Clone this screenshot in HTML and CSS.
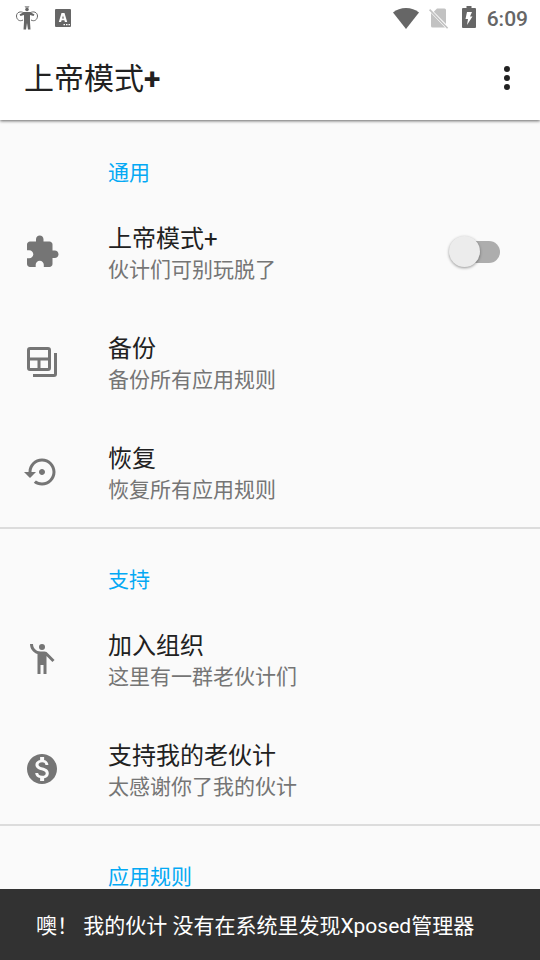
FILE: index.html
```html
<!DOCTYPE html>
<html lang="zh-CN">
<head>
<meta charset="utf-8">
<meta name="viewport" content="width=device-width, initial-scale=1">
<title>上帝模式+</title>
<link rel="stylesheet" href="styles.css">
</head>
<body>
<header class="app-header">
  <div class="status-bar">
    <div class="status-group">
      <svg class="status-person" viewBox="0 0 22 26" aria-hidden="true">
        <path d="M8.500 1h5l-1 2h-3z" opacity=".6"/>
        <circle cx="11" cy="4.500" r="1.800"/>
        <path d="M8 7h6l4.500 2.500-1 1.500-3.500-1v7l.5 7.500h-2.500L11 18l-1 6.500H7.500L8 17v-7l-3.500 1-1-1.500z"/>
        <path d="M8 8C4.500 5.500.500 7.500.500 11s3 6 6.500 4M14 8c3.500-2.500 7.500-.5 7.500 3s-3 6-6.500 4" fill="none" stroke="currentColor" stroke-width="1"/>
      </svg>
      <svg class="status-input" viewBox="0 0 16 18" aria-hidden="true">
        <path fill-rule="evenodd" d="M1 0h14a1 1 0 0 1 1 1v16a1 1 0 0 1-1 1H1a1 1 0 0 1-1-1V1a1 1 0 0 1 1-1zM6.500 4L3.800 13h2.300l.5-1.700h2.800l.5 1.700h2.300L9.500 4zM7.100 9.600L8 6.400l.9 3.200zM8.500 15v1.300H10V15zm2.500 0v1.300h1.500V15zm2.500 0v1.300H15V15z"/>
      </svg>
    </div>
    <div class="status-group status-right">
      <svg class="status-wifi" viewBox="0 0 26 21" aria-hidden="true"><path d="M13 21L0 4.500C3.500 1.600 8 0 13 0s9.500 1.600 13 4.500z"/></svg>
      <svg class="status-sim" viewBox="0 0 20 21" aria-hidden="true"><path d="M8 .5h7.500A1.500 1.500 0 0 1 17 2v14L4.800 3.700zM2 5l14 14.500H3.500A1.500 1.500 0 0 1 2 18z"/><path d="M.6 1.600L18.600 20.300" fill="none" stroke="currentColor" stroke-width="1.600"/></svg>
      <svg class="status-battery" viewBox="0 0 14 22" aria-hidden="true"><path fill-rule="evenodd" d="M4.500 0h5v2H13a1 1 0 0 1 1 1v18a1 1 0 0 1-1 1H1a1 1 0 0 1-1-1V3a1 1 0 0 1 1-1h3.500zM5 6l-1.500 7H6l-1 6 5.500-8.500H8L10 6z"/></svg>
      <time class="clock">6:09</time>
    </div>
  </div>
  <div class="toolbar">
    <h1 class="toolbar-title">上帝模式<span class="plus">+</span></h1>
    <button class="menu-button" type="button" aria-label="更多选项">
      <svg class="icon" viewBox="0 0 24 24" aria-hidden="true"><circle cx="12" cy="6" r="2"/><circle cx="12" cy="12" r="2"/><circle cx="12" cy="18" r="2"/></svg>
    </button>
  </div>
</header>

<main>
  <section class="group">
    <h2 class="group-title">通用</h2>
    <label class="row">
      <svg class="icon" viewBox="0 0 24 24" aria-hidden="true"><path d="M20.500 11H19V7c0-1.100-.9-2-2-2h-4V3.500C13 2.120 11.880 1 10.500 1S8 2.120 8 3.500V5H4c-1.100 0-1.990.9-1.990 2v3.800H3.500c1.490 0 2.700 1.210 2.700 2.700s-1.210 2.700-2.700 2.700H2V20c0 1.100.9 2 2 2h3.800v-1.500c0-1.490 1.210-2.700 2.700-2.700 1.490 0 2.700 1.210 2.700 2.700V22H17c1.100 0 2-.9 2-2v-4h1.500c1.380 0 2.500-1.120 2.500-2.500S21.880 11 20.500 11z"/></svg>
      <span class="row-text"><span class="row-title">上帝模式+</span><span class="row-summary">伙计们可别玩脱了</span></span>
      <input class="switch" type="checkbox" role="switch">
    </label>
    <button class="row" type="button">
      <svg class="icon" viewBox="0 0 24 24" aria-hidden="true"><g fill="none" stroke="currentColor" stroke-width="2"><rect x="3" y="3" width="14" height="14" rx="1"/><path d="M3 10h14M10 10v7"/><path d="M21 6v14a1 1 0 0 1-1 1H6"/></g></svg>
      <span class="row-text"><span class="row-title">备份</span><span class="row-summary">备份所有应用规则</span></span>
    </button>
    <button class="row" type="button">
      <svg class="icon" viewBox="0 0 24 24" aria-hidden="true"><path d="M14 12c0-1.100-.9-2-2-2s-2 .9-2 2 .9 2 2 2 2-.9 2-2zm-2-9c-4.970 0-9 4.030-9 9H0l4 4 4-4H5c0-3.870 3.130-7 7-7s7 3.130 7 7-3.130 7-7 7c-1.510 0-2.910-.49-4.060-1.300l-1.420 1.440C8.040 20.300 9.940 21 12 21c4.970 0 9-4.030 9-9s-4.030-9-9-9z"/></svg>
      <span class="row-text"><span class="row-title">恢复</span><span class="row-summary">恢复所有应用规则</span></span>
    </button>
  </section>

  <section class="group">
    <h2 class="group-title">支持</h2>
    <button class="row" type="button">
      <svg class="icon" viewBox="0 0 24 24" aria-hidden="true"><circle cx="12" cy="4" r="2"/><path d="M15.890 8.110C15.500 7.720 14.830 7 13.530 7h-2.540C8.240 6.990 6 4.750 6 2H4c0 3.160 2.110 5.840 5 6.710V22h2v-6h2v6h2V10.050L18.950 14l1.410-1.410z"/></svg>
      <span class="row-text"><span class="row-title">加入组织</span><span class="row-summary">这里有一群老伙计们</span></span>
    </button>
    <button class="row" type="button">
      <svg class="icon" viewBox="0 0 24 24" aria-hidden="true"><path d="M12 2C6.480 2 2 6.480 2 12s4.480 10 10 10 10-4.480 10-10S17.520 2 12 2zm1.410 16.090V20h-2.670v-1.930c-1.710-.36-3.160-1.460-3.270-3.400h1.960c.1 1.050.82 1.870 2.650 1.870 1.960 0 2.400-.98 2.400-1.590 0-.83-.44-1.610-2.670-2.140-2.480-.6-4.180-1.620-4.180-3.670 0-1.720 1.390-2.840 3.110-3.210V4h2.670v1.950c1.860.45 2.790 1.860 2.850 3.390H14.300c-.05-1.110-.64-1.870-2.220-1.870-1.500 0-2.400.68-2.400 1.640 0 .84.65 1.390 2.670 1.910s4.180 1.390 4.180 3.910c-.01 1.830-1.380 2.830-3.120 3.160z"/></svg>
      <span class="row-text"><span class="row-title">支持我的老伙计</span><span class="row-summary">太感谢你了我的伙计</span></span>
    </button>
  </section>

  <section class="group">
    <h2 class="group-title">应用规则</h2>
  </section>
</main>

<div class="snackbar" role="status">噢！ 我的伙计 没有在系统里发现Xposed管理器</div>
</body>
</html>
```
FILE: styles.css
```css
* {
  box-sizing: border-box;
}

body {
  margin: 0;
  background: #fafafa;
  color: #212121;
  font-family: Roboto, "Noto Sans CJK SC", sans-serif;
}

svg {
  display: block;
  flex: none;
  fill: currentColor;
}

.app-header {
  position: relative;
  background: #fff;
  box-shadow: 0 1px 3px rgba(0, 0, 0, 0.6);
}

.status-bar {
  display: flex;
  justify-content: space-between;
  height: 36px;
  padding: 0 12px 0 16px;
  color: #666;
}

.status-group {
  display: flex;
  align-items: center;
  gap: 17px;
}

.status-right {
  gap: 10px;
}

.status-person {
  width: 22px;
  height: 26px;
}

.status-input {
  width: 16px;
  height: 18px;
}

.status-wifi {
  width: 26px;
  height: 21px;
}

.status-sim {
  width: 20px;
  height: 21px;
  color: #c2c2c2;
}

.status-battery {
  width: 14px;
  height: 22px;
  margin: 0 1px 2px 3px;
}

.clock {
  padding-top: 2px;
  font-size: 21px;
  font-weight: 500;
  line-height: 36px;
}

.toolbar {
  display: flex;
  align-items: center;
  justify-content: space-between;
  height: 84px;
  padding: 0 15px 0 24px;
}

.toolbar-title {
  margin: 0;
  padding-top: 2px;
  font-size: 30px;
  font-weight: 400;
  line-height: 40px;
}

.plus {
  font-weight: 700;
}

.menu-button {
  padding: 0;
  border: 0;
  background: none;
  color: #212121;
}

.icon {
  width: 36px;
  height: 36px;
}

.group {
  border-top: 2px solid #dcdcdc;
}

.group:first-child {
  border-top-color: transparent;
}

.group-title {
  margin: 0;
  padding: 35px 24px 8px 108px;
  color: #03a9f4;
  font-size: 21px;
  font-weight: 400;
  line-height: 32px;
}

.row {
  display: flex;
  align-items: center;
  gap: 48px;
  width: 100%;
  min-height: 110px;
  padding: 0 40px 0 24px;
  border: 0;
  background: none;
  color: #757575;
  font: inherit;
  text-align: left;
}

.row-text {
  display: flex;
  flex: 1;
  flex-direction: column;
  padding-top: 4px;
}

.row-title {
  color: #212121;
  font-size: 24px;
  line-height: 32px;
}

.row-summary {
  font-size: 21px;
  line-height: 30px;
}

.switch {
  position: relative;
  width: 42px;
  height: 22px;
  margin: 0;
  border-radius: 11px;
  background: #adadad;
  appearance: none;
}

.switch::before {
  position: absolute;
  top: -5px;
  left: -9px;
  width: 31px;
  height: 31px;
  border-radius: 50%;
  background: #ececec;
  box-shadow: 0 1px 3px rgba(0, 0, 0, 0.4);
  content: "";
}

.switch:checked::before {
  left: 20px;
  background: #03a9f4;
}

.snackbar {
  position: fixed;
  right: 0;
  bottom: 0;
  left: 0;
  padding: 21px 36px 18px;
  background: #323232;
  color: #fff;
  font-size: 21px;
  line-height: 32px;
}
```
